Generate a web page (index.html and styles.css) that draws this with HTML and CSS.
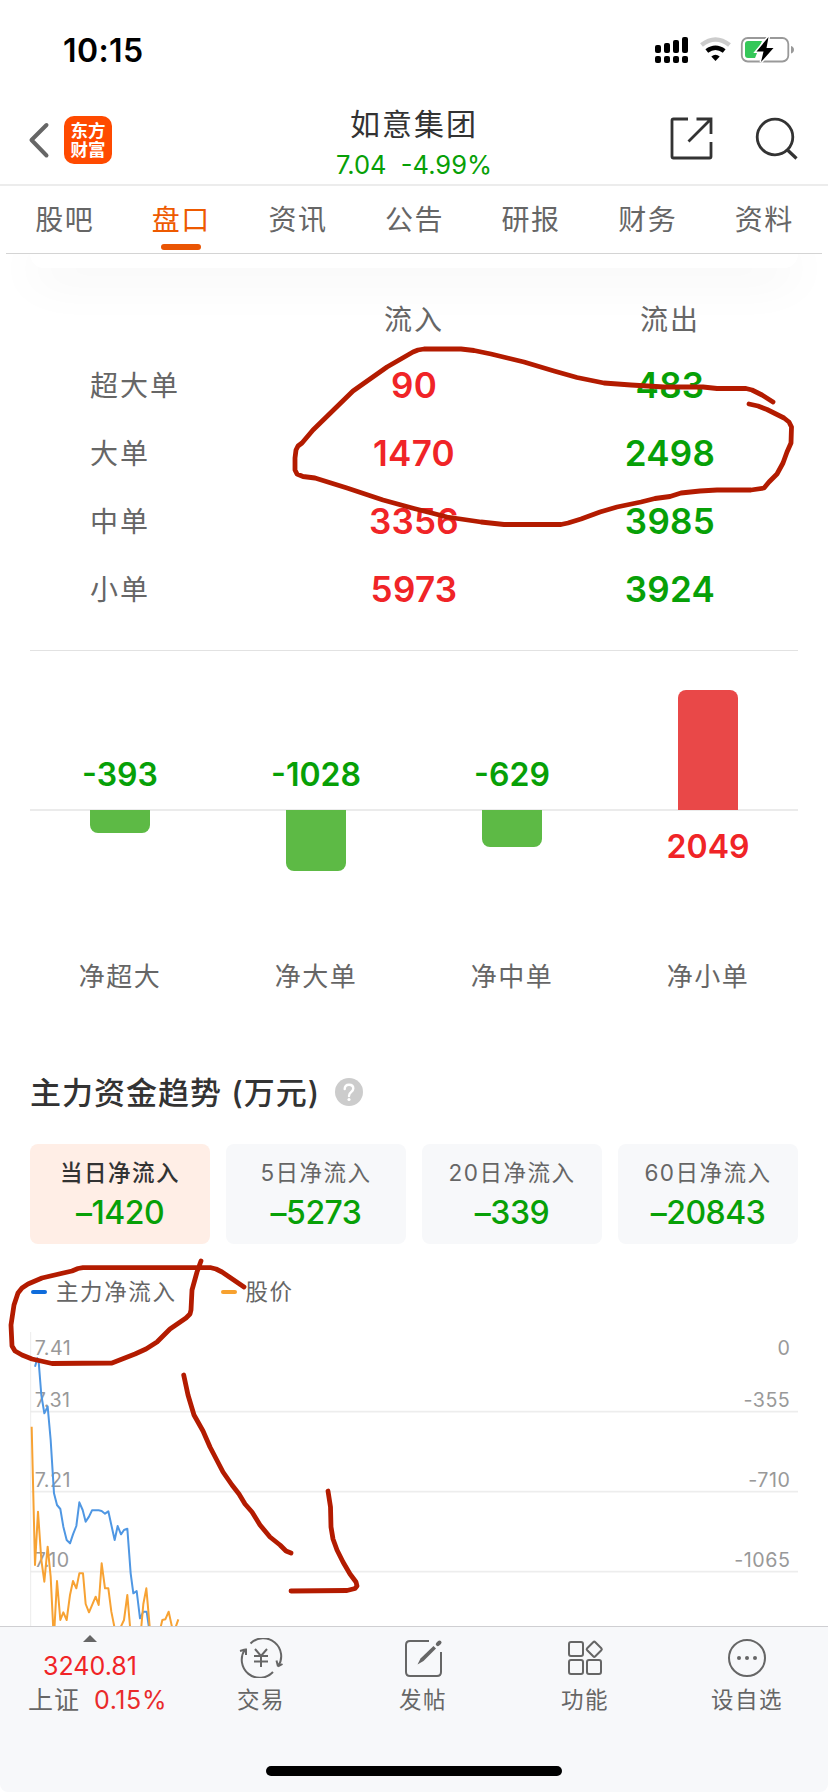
FILE: index.html
```html
<!DOCTYPE html>
<html lang="zh-CN">
<head>
<title>如意集团</title>
<meta charset="UTF-8">
<meta name="viewport" content="width=device-width, initial-scale=1.0">
<link rel="stylesheet" href="styles.css">
</head>
<body>
<div class="page">

<div class="status-bar">
<span class="time">10:15</span>
<svg class="status-icons" width="142" height="32" viewBox="654 34 142 32">
<g>
<rect x="655" y="45" width="6" height="8" rx="2"/>
<rect x="664" y="43" width="6" height="10" rx="2"/>
<rect x="673" y="40" width="6" height="13" rx="2"/>
<rect x="682" y="37" width="6" height="16" rx="2"/>
<rect x="655" y="56" width="6" height="7" rx="2"/>
<rect x="664" y="56" width="6" height="7" rx="2"/>
<rect x="673" y="56" width="6" height="7" rx="2"/>
<rect x="682" y="56" width="6" height="7" rx="2"/>
</g>
<path d="M701.500 45 Q715.500 34 729.500 45" fill="none" stroke="#ccc" stroke-width="4.600"/>
<path d="M706.800 51 Q715.500 44.500 724.200 51" fill="none" stroke="#000" stroke-width="4.600"/>
<path d="M711.300 56.500 Q715.500 52.800 719.700 56.500 L715.500 61 Z"/>
<rect x="741.800" y="38" width="46.500" height="23.500" rx="6" fill="none" stroke="#999" stroke-width="1.800"/>
<path d="M791 46 Q794 47 794 49.700 Q794 52.500 791 53.500 Z" fill="#999"/>
<path d="M748 41 H762 L755 58 H748 Q745 58 745 55 V44 Q745 41 748 41 Z" fill="#35c759"/>
<path d="M768.500 37 L756.500 51.500 H763.500 L761 62 L773.500 48 H766.500 Z" fill="#000" stroke="#fff" stroke-width="3" paint-order="stroke"/>
</svg>
</div>

<div class="header">
<div class="header-left">
<svg width="24" height="40" viewBox="0 0 24 40"><path d="M18.500 5 L3.500 20 L18.500 35.500" fill="none" stroke="#666" stroke-width="4" stroke-linecap="round" stroke-linejoin="round"/></svg>
<div class="logo"><span>东方</span><span>财富</span></div>
</div>
<div class="header-title">
<h1>如意集团</h1>
<p>7.04&nbsp; -4.99%</p>
</div>
<div class="header-right">
<svg width="44" height="44" viewBox="0 0 44 44" fill="none" stroke="#333" stroke-width="2.800">
<path d="M18 2 H3.500 Q2 2 2 3.500 V39.500 Q2 41 3.500 41 H39.500 Q41 41 41 39.500 V25"/>
<path d="M26.500 2 H41 V17 M40 3 L18.500 24.500"/>
</svg>
<svg width="44" height="44" viewBox="0 0 44 44" fill="none" stroke="#333" stroke-width="2.800">
<circle cx="20" cy="20" r="17.800"/>
<path d="M32 32.500 L41.500 41.500" stroke-width="3.200"/>
</svg>
</div>
</div>

<div class="tabs">
<div class="tab">股吧</div>
<div class="tab active">盘口</div>
<div class="tab">资讯</div>
<div class="tab">公告</div>
<div class="tab">研报</div>
<div class="tab">财务</div>
<div class="tab">资料</div>
</div>

<div class="prev">
<div class="prev-card"></div>
</div>

<div class="orders">
<div class="row head"><span></span><span>流入</span><span>流出</span></div>
<div class="row"><span class="name">超大单</span><span class="num red">90</span><span class="num green">483</span></div>
<div class="row"><span class="name">大单</span><span class="num red">1470</span><span class="num green">2498</span></div>
<div class="row"><span class="name">中单</span><span class="num red">3356</span><span class="num green">3985</span></div>
<div class="row"><span class="name">小单</span><span class="num red">5973</span><span class="num green">3924</span></div>
</div>

<div class="bars">
<div class="bar-col">
<div class="up"><span class="green">-393</span></div>
<div class="down"><i class="bar bar-green" style="height:23px"></i></div>
<p>净超大</p>
</div>
<div class="bar-col">
<div class="up"><span class="green">-1028</span></div>
<div class="down"><i class="bar bar-green" style="height:61px"></i></div>
<p>净大单</p>
</div>
<div class="bar-col">
<div class="up"><span class="green">-629</span></div>
<div class="down"><i class="bar bar-green" style="height:37px"></i></div>
<p>净中单</p>
</div>
<div class="bar-col">
<div class="up"><i class="bar bar-red" style="height:120px"></i></div>
<div class="down"><span class="red">2049</span></div>
<p>净小单</p>
</div>
</div>

<div class="trend-title">
<h2>主力资金趋势 (万元)</h2>
<svg width="28" height="28" viewBox="0 0 28 28"><circle cx="14" cy="14" r="14" fill="#ccc"/><path d="M9.700 11 Q9.700 6.800 14 6.800 Q18.300 6.800 18.300 10.600 Q18.300 12.700 16 14.200 Q14 15.500 14 18" fill="none" stroke="#fff" stroke-width="2.400" stroke-linecap="round"/><circle cx="14" cy="21.500" r="1.600" fill="#fff"/></svg>
</div>

<div class="periods">
<div class="period on"><span>当日净流入</span><b>–1420</b></div>
<div class="period"><span>5日净流入</span><b>–5273</b></div>
<div class="period"><span>20日净流入</span><b>–339</b></div>
<div class="period"><span>60日净流入</span><b>–20843</b></div>
</div>

<div class="legend">
<i class="dash blue"></i><span class="main-flow">主力净流入</span>
<i class="dash orange"></i><span>股价</span>
</div>

<!-- viewBox is 3 units to the pixel -->
<svg class="chart" width="768" height="294" viewBox="90 66 2304 882">
<g class="grid">
<path d="M90 305 H2394 M90 545 H2394 M90 785 H2394"/>
<path d="M92 66 V948" stroke-width="3"/>
</g>
<g class="axis">
<text x="104" y="134">7.41</text>
<text x="104" y="291">7.31</text>
<text x="104" y="531">7.21</text>
<text x="104" y="771">7.10</text>
<g text-anchor="end">
<text x="2371" y="134">0</text>
<text x="2371" y="291">-355</text>
<text x="2371" y="531">-710</text>
<text x="2371" y="771">-1065</text>
</g>
</g>
<polyline class="line-flow" points="105,170 112,145 116,155 124,255 133,310 143,290 152,390 162,550 171,585 181,597 190,650 200,690 210,700 219,673 229,648 238,577 248,600 257,635 267,620 276,601 296,601 305,603 315,611 325,604 334,645 344,690 353,648 363,673 372,660 382,656 392,790 400,850 410,843 420,925 430,905 440,905 448,960"/>
<polyline class="line-price" points="95,350 105,765 114,605 124,750 133,815 143,710 152,800 160,960 163,960 171,813 181,930 190,907 200,930 210,855 219,813 229,835 238,790 249,790 257,882 267,907 287,860 296,885 305,760 315,835 325,835 334,905 345,960 358,960 372,930 382,855 391,960 423,960 430,882 439,835 450,960 480,960 487,930 496,928 506,905 518,960 524,960 535,928"/>
</svg>

<div class="footer">
<div class="nav">
<div class="index">
<i class="arrow"></i>
<span class="index-value">3240.81</span>
<span class="index-name">上证 <em>0.15%</em></span>
</div>
<div class="nav-item">
<svg width="44" height="40" viewBox="0 0 44 40" fill="none" stroke="#666" stroke-width="2">
<path d="M11.500 5.500 A18 18 0 0 1 39 28.500 M39 28.500 L43.500 26 M39 28.500 L37.500 22.500"/>
<path d="M34 34 A18 18 0 0 1 6 11.500 M6 11.500 L1 13 M7 10.500 V17"/>
<path d="M16 11 L22 18 L28 11 M22 18 V29 M15 18 H29 M15 23.500 H29"/>
</svg>
<span>交易</span>
</div>
<div class="nav-item">
<svg width="40" height="40" viewBox="0 0 40 40" fill="none" stroke="#666" stroke-width="2">
<path d="M26 3 H7 Q3 3 3 7 V34 Q3 38 7 38 H34 Q38 38 38 34 V14"/>
<path d="M33 10.500 L30.500 8 L17.500 20.500 L14.500 26.500 L20.500 23 Z" fill="#666" stroke="none"/>
<path d="M34.800 6.200 L36.500 4.500" stroke-width="4" stroke-linecap="round"/>
</svg>
<span>发帖</span>
</div>
<div class="nav-item">
<svg width="40" height="40" viewBox="0 0 40 40" fill="none" stroke="#666" stroke-width="2">
<rect x="4" y="4" width="14" height="14" rx="2"/>
<rect x="4" y="22" width="14" height="14" rx="2"/>
<rect x="22" y="22" width="14" height="14" rx="2"/>
<rect x="23.500" y="5.500" width="11.500" height="11.500" rx="1.500" transform="rotate(45 29.250 11.250)"/>
</svg>
<span>功能</span>
</div>
<div class="nav-item">
<svg width="40" height="40" viewBox="0 0 40 40" fill="none" stroke="#666" stroke-width="2">
<circle cx="20" cy="20" r="18"/>
<g fill="#666" stroke="none"><circle cx="12" cy="20" r="2"/><circle cx="20" cy="20" r="2"/><circle cx="28" cy="20" r="2"/></g>
</svg>
<span>设自选</span>
</div>
</div>
<div class="home"></div>
</div>

<!-- pen marks -->
<svg class="marks" width="828" height="1792" viewBox="0 0 828 1792">
<polyline points="773,402 762,395 752,390 746,388.500 717,388.500 703,387 664,387 631,385 604,383 577,377.500 554,371 524,362 491,354 474,350.500 461,349 424,349 418,350 413,352 387,367 353,391 313,430 302,443 298,446 296,450 295,458 295,470 297,474 303,476.500 315,478 347,488 383,500 414,508.500 447,517 481,522 504,524.500 561,524.500 568,523 581,519 600,512 617,507 641,502 655,498.500 670,496.500 681,493 700,491 717,490 751,490 764,488 769,482 777,474 783,463 787,452 791,443 791.500,427 789,422 784,418 767,409.500 758,406 749,404"/>
<polyline points="201,1261 197,1272 192,1290 191,1310 190,1314 186,1318 170,1329 157,1342 146,1349 135,1354 112,1363 52,1363.500 32,1359 22,1355 15,1351 12,1346 11,1325 14,1305 18,1293 22,1288 28,1284 42,1278 72,1271 78,1268.500 83,1267.700 211,1267.700 216,1269 222,1272 244,1287"/>
<polyline points="183.700,1375 188,1395 194,1415 203,1431 210,1447 223,1472 232,1485 239,1494 245,1504 252,1512 260,1525 270,1537 280,1545 286,1551 291,1553"/>
<polyline points="328,1491 330.500,1507 331,1527 333,1539 337,1550 343,1562 350,1574 356,1582 357,1586 355,1588.500 347,1590.500 291,1591"/>
</svg>

</div>
</body>
</html>
```
FILE: styles.css
```css
*{
    box-sizing: border-box;
}
body{
    margin: 0;
    background: #fff;
    font-family: Inter, "Noto Sans CJK SC", sans-serif;
    color: #666;
}
h1, h2, p{
    margin: 0;
    font-weight: 400;
}
svg{
    display: block;
}
.page{
    position: relative;
    width: 828px;
    height: 1792px;
    overflow: hidden;
}
.red{
    color: #f02427;
}
.green{
    color: #07a007;
}

/* status bar */
.status-bar{
    height: 96px;
    padding: 34px 32px 0 63px;
    display: flex;
    justify-content: space-between;
    align-items: flex-start;
}
.time{
    font-size: 32px;
    line-height: 34px;
    letter-spacing: .4px;
    font-weight: 600;
    color: #000;
}

/* header */
.header{
    height: 90px;
    border-bottom: 2px solid #ececec;
    display: grid;
    grid-template-columns: 1fr 260px 1fr;
}
.header-left{
    padding: 20px 0 0 28px;
    display: flex;
    gap: 12px;
    align-items: flex-start;
}
.header-left svg{
    margin-top: 4px;
}
.logo{
    width: 48px;
    height: 48px;
    border-radius: 10px;
    background: #ff4a00;
    color: #fff;
    font-size: 17.5px;
    line-height: 19px;
    font-weight: 700;
    display: flex;
    flex-direction: column;
    align-items: center;
    justify-content: center;
}
.header-title{
    text-align: center;
    padding-top: 10px;
}
.header-title h1{
    font-size: 30px;
    line-height: 36px;
    letter-spacing: 2px;
    color: #333;
}
.header-title p{
    font-size: 25.5px;
    line-height: 30px;
    margin-top: 8px;
    color: #07a007;
}
.header-right{
    padding: 21px 29px 0 0;
    display: flex;
    justify-content: flex-end;
    gap: 41px;
}

/* tabs */
.tabs{
    height: 68px;
    margin: 0 6px;
    border-bottom: 1px solid #d4d4d4;
    display: grid;
    grid-template-columns: repeat(7, 1fr);
}
.tab{
    display: flex;
    flex-direction: column;
    align-items: center;
    padding: 15px 0 0 1px;
    font-size: 28px;
    line-height: 38px;
    letter-spacing: 1.5px;
}
.tab.active{
    color: #ee5a00;
}
.tab.active::after{
    content: "";
    width: 40px;
    height: 6px;
    border-radius: 3px;
    margin-top: 5px;
    background: #ea5504;
}

.prev{
    height: 66px;
    overflow: hidden;
    padding: 0 30px;
    margin-bottom: -14px;
}
.prev-card{
    height: 14px;
    border-radius: 0 0 14px 14px;
    background: #fff;
    box-shadow: 0 8px 50px rgba(0,0,0,.09);
}

/* order table */
.orders{
    margin: 0 30px;
    height: 345px;
    border-bottom: 1px solid #e2e2e2;
}
.row{
    display: grid;
    grid-template-columns: repeat(3, 256px);
    height: 68px;
    align-items: center;
    text-align: center;
}
.row.head{
    height: 45px;
    align-items: start;
}
.row.head, .name{
    font-size: 28px;
    line-height: 1;
    letter-spacing: 2px;
}
.name{
    text-align: left;
    padding: 2px 0 0 60px;
}
.num{
    font-size: 35px;
    font-weight: 600;
    letter-spacing: .3px;
}

/* net flow bars */
.bars{
    margin: 0 30px;
    height: 393px;
    display: grid;
    grid-template-columns: repeat(4, 180px);
    gap: 16px;
    background: linear-gradient(#ebebeb, #ebebeb) 0 158px / 100% 2px no-repeat;
}
.bar-col{
    display: flex;
    flex-direction: column;
    align-items: center;
}
.up{
    height: 159px;
    display: flex;
    align-items: flex-end;
}
.up span, .down span{
    font-size: 32px;
    line-height: 32px;
    font-weight: 600;
}
.up span{
    margin-bottom: 19px;
}
.down{
    height: 148px;
}
.down span{
    display: block;
    margin-top: 21px;
}
.bar{
    display: block;
    width: 60px;
}
.bar-green{
    background: #5dba45;
    border-radius: 0 0 8px 8px;
}
.bar-red{
    background: #e94848;
    border-radius: 8px 8px 0 0;
}
.bar-col p{
    font-size: 26px;
    line-height: 38px;
    letter-spacing: 1.5px;
}

/* trend */
.trend-title{
    height: 100px;
    padding: 26px 30px 0;
    display: flex;
    align-items: flex-start;
    gap: 15px;
}
.trend-title h2{
    font-size: 31px;
    line-height: 45px;
    letter-spacing: 1px;
    font-weight: 500;
    color: #333;
}
.trend-title svg{
    margin-top: 8px;
}
.periods{
    margin: 0 30px;
    display: grid;
    grid-template-columns: repeat(4, 180px);
    gap: 16px;
}
.period{
    height: 100px;
    border-radius: 8px;
    background: #f7f8fa;
    text-align: center;
    padding-top: 13px;
}
.period.on{
    background: #ffeee6;
}
.period span{
    display: block;
    font-size: 22.5px;
    line-height: 32px;
    letter-spacing: 1.5px;
}
.period.on span{
    color: #333;
    font-weight: 500;
}
.period b{
    display: block;
    font-size: 32px;
    line-height: 32px;
    margin-top: 8px;
    font-weight: 500;
    letter-spacing: -.5px;
    color: #07a007;
}
.legend{
    height: 88px;
    padding: 32px 31px 0;
    display: flex;
    font-size: 22.5px;
    line-height: 32px;
    letter-spacing: 1.6px;
}
.dash{
    width: 16px;
    height: 4px;
    border-radius: 2px;
    margin: 14px 9px 0 0;
}
.dash.blue{
    background: #0e6cdc;
}
.dash.orange{
    background: #f7a12f;
}
.main-flow{
    margin-right: 44px;
}
.chart{
    margin-left: 30px;
}
.grid{
    fill: none;
    stroke: #ededed;
    stroke-width: 5;
}
.line-flow, .line-price{
    fill: none;
    stroke-width: 6;
    stroke-linejoin: round;
}
.line-flow{
    stroke: #4f97e3;
}
.line-price{
    stroke: #f7a233;
}
.axis{
    font-size: 59px;
    letter-spacing: 1.5px;
    fill: #999;
}

/* bottom bar */
.footer{
    height: 166px;
    background: #f7f8fa;
    border-top: 1px solid #cfcfd2;
    border-radius: 0 0 8px 8px;
}
.nav{
    height: 139px;
    display: grid;
    grid-template-columns: 180px repeat(4, 162px);
}
.index{
    display: flex;
    flex-direction: column;
    align-items: center;
    padding-top: 8px;
}
.arrow{
    border: 7px solid transparent;
    border-top: 0;
    border-bottom: 7px solid #666;
}
.index-value{
    font-size: 25px;
    line-height: 30px;
    margin-top: 9px;
    color: #f02427;
}
.index-name{
    display: flex;
    gap: 14px;
    font-size: 25px;
    line-height: 38px;
    margin-left: 15px;
    letter-spacing: 1px;
    white-space: nowrap;
}
.index-name em{
    font-style: normal;
    letter-spacing: .6px;
    color: #e92b2b;
}
.nav-item{
    display: flex;
    flex-direction: column;
    align-items: center;
    padding-top: 11px;
    font-size: 22.5px;
    line-height: 34px;
    letter-spacing: 1.5px;
}
.nav-item span{
    margin-top: 5px;
}
.home{
    width: 296px;
    height: 10px;
    border-radius: 5px;
    margin: 0 auto;
    background: #000;
}

.marks{
    position: absolute;
    left: 0;
    top: 0;
    pointer-events: none;
    fill: none;
    stroke: #b31b00;
    stroke-width: 4.800;
    stroke-linecap: round;
    stroke-linejoin: round;
}
```
